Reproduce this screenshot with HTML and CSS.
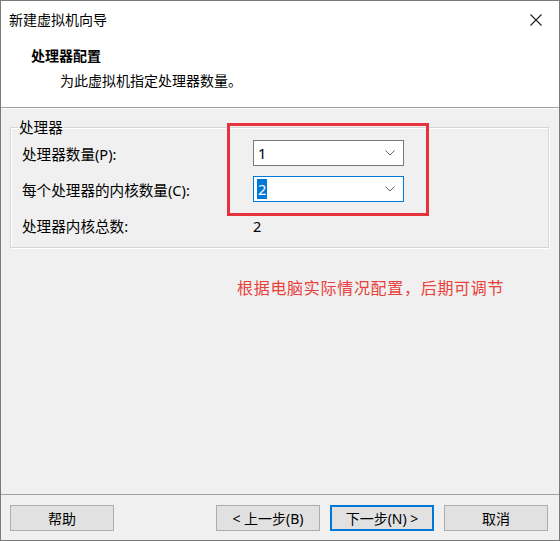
FILE: index.html
```html
<!DOCTYPE html>
<html lang="zh-CN">
<head>
    <meta charset="UTF-8">
    <meta name="viewport" content="width=device-width, initial-scale=1.0">
    <title>新建虚拟机向导</title>
    <link rel="stylesheet" href="styles.css">
</head>
<body>
    <div class="window">
        <div class="titlebar">
            <span class="title">新建虚拟机向导</span>
            <button class="close" title="关闭">
                <svg width="12" height="12" viewBox="0 0 12 12">
                    <path d="M0.5 0.5 L11.5 11.5 M11.5 0.5 L0.5 11.5" stroke="#222" stroke-width="1.1" fill="none"/>
                </svg>
            </button>
        </div>

        <div class="header">
            <div class="header-title">处理器配置</div>
            <div class="header-desc">为此虚拟机指定处理器数量。</div>
        </div>

        <div class="content">
            <fieldset class="group">
                <legend>处理器</legend>
                <div class="form-grid">
                    <label>处理器数量(P):</label>
                    <div class="combo">
                        <span class="value">1</span>
                        <svg class="arrow" width="10" height="6" viewBox="0 0 10 6">
                            <path d="M0.5 0.5 L5 5 L9.5 0.5" stroke="#666" stroke-width="1" fill="none"/>
                        </svg>
                    </div>

                    <label>每个处理器的内核数量(C):</label>
                    <div class="combo focused">
                        <span class="value selected">2</span>
                        <svg class="arrow" width="10" height="6" viewBox="0 0 10 6">
                            <path d="M0.5 0.5 L5 5 L9.5 0.5" stroke="#666" stroke-width="1" fill="none"/>
                        </svg>
                    </div>

                    <label class="total-label">处理器内核总数:</label>
                    <span class="total-value">2</span>
                </div>
            </fieldset>

            <!-- 标注 -->
            <div class="mark-box"></div>
            <p class="note">根据电脑实际情况配置，后期可调节</p>
        </div>

        <div class="footer">
            <button class="btn">帮助</button>
            <div class="footer-right">
                <button class="btn">&lt; 上一步(B)</button>
                <button class="btn default">下一步(N) &gt;</button>
                <button class="btn">取消</button>
            </div>
        </div>
    </div>
</body>
</html>
```

FILE: styles.css
```css
body {
    margin: 0;
    padding: 0;
    font-family: "Noto Sans", "Noto Sans CJK SC", sans-serif;
    font-size: 14px;
    color: #000;
    background-color: #fff;
}
.window {
    width: 560px;
    height: 541px;
    box-sizing: border-box;
    border: 1px solid #7a7a7a;
    display: flex;
    flex-direction: column;
    background-color: #f0f0f0;
}
.titlebar {
    height: 38px;
    background-color: #fff;
    display: flex;
    align-items: center;
    justify-content: space-between;
    padding-left: 8px;
}
.title {
    font-size: 14px;
    line-height: 20px;
}
.close {
    width: 46px;
    height: 38px;
    border: none;
    background: transparent;
    display: flex;
    align-items: center;
    justify-content: center;
    padding: 0;
}
.header {
    height: 69px;
    box-sizing: border-box;
    background-color: #fff;
    border-bottom: 1px solid #a0a0a0;
    padding-top: 7px;
}
.header-title {
    font-weight: bold;
    line-height: 20px;
    padding-left: 30px;
}
.header-desc {
    line-height: 20px;
    margin-top: 5px;
    padding-left: 59px;
}
.content {
    flex: 1;
    position: relative;
    border-top: 1px solid #fff;
    font-size: 14.6px;
}
.group {
    margin: 8px 10px 0 9px;
    padding: 3px 11px 15px 11px;
    border: 1px solid #d5d5d5;
    box-shadow: 1px 1px 0 #fff, inset 1px 1px 0 #fff;
}
.group legend {
    padding: 0 1px;
    margin-left: -4px;
    line-height: 20px;
}
.form-grid {
    display: grid;
    grid-template-columns: 231px 151px;
    grid-template-rows: 26px 26px 20px;
    row-gap: 10px;
    align-items: center;
}
.total-label,
.total-value {
    margin-top: 7px;
}
.combo {
    height: 26px;
    box-sizing: border-box;
    border: 1px solid #7a7a7a;
    background-color: #fff;
    display: flex;
    align-items: center;
    justify-content: space-between;
    padding: 0 8px 0 3px;
}
.combo.focused {
    border-color: #0078d7;
}
.value {
    line-height: 20px;
    padding: 0 1px;
}
.value.selected {
    background-color: #0078d7;
    color: #fff;
}
.mark-box {
    position: absolute;
    left: 226px;
    top: 14px;
    width: 202px;
    height: 93px;
    box-sizing: border-box;
    border: 3px solid #e5323d;
}
.note {
    margin: 29px 0 0 236px;
    color: #e8403a;
    font-size: 16px;
    letter-spacing: 0.7px;
    line-height: 22px;
}
.footer {
    height: 46px;
    box-sizing: border-box;
    border-top: 1px solid #a0a0a0;
    display: flex;
    justify-content: space-between;
    padding: 10px 11px 0 9px;
}
.footer-right {
    display: flex;
    gap: 10px;
}
.btn {
    width: 104px;
    height: 26px;
    box-sizing: border-box;
    border: 1px solid #adadad;
    background-color: #e1e1e1;
    font-family: "Noto Sans", "Noto Sans CJK SC", sans-serif;
    font-size: 14px;
    padding: 0;
    color: #000;
}
.btn.default {
    border: 1px solid #0078d7;
    box-shadow: inset 0 0 0 1px #0078d7;
}
```
